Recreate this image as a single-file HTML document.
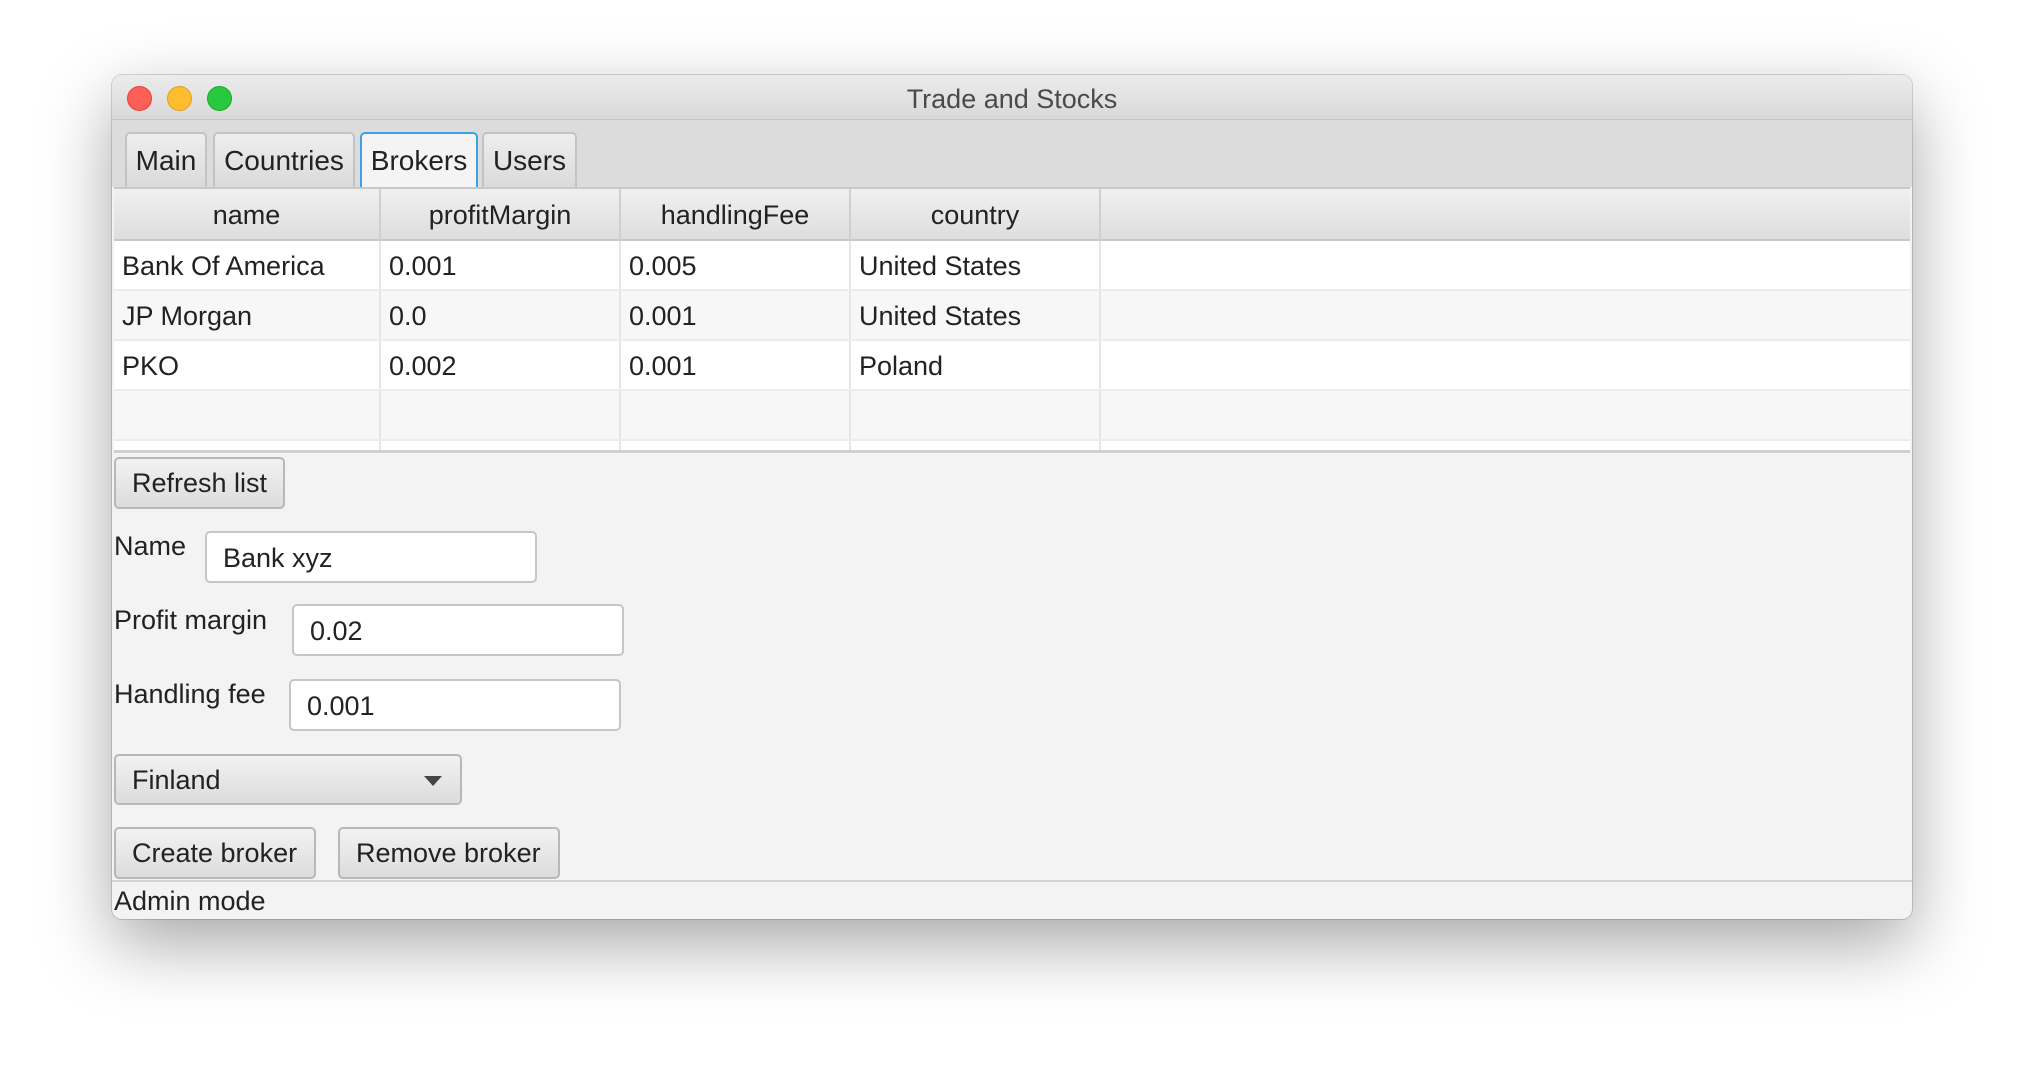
<!DOCTYPE html>
<html><head><style>
body{margin:0;width:2024px;height:1068px;background:#fff;position:relative;overflow:hidden;font-family:"Liberation Sans",sans-serif;color:#222}
.win{position:absolute;left:112px;top:75px;width:1800px;height:844px;background:#f3f3f3;border-radius:10px;box-shadow:0 25px 70px rgba(0,0,0,.35),0 0 0 1px rgba(0,0,0,.15);overflow:hidden}
.title{position:absolute;left:0;top:0;right:0;height:44px;background:linear-gradient(#ececec,#d9d9d9);border-bottom:1px solid #c4c4c4;text-align:center;line-height:48px;font-size:27px;color:#4a4a4a}
.dot{position:absolute;top:11px;width:23px;height:23px;border-radius:50%}
.tabs{position:absolute;left:0;top:45px;right:0;height:67px;background:#dcdcdc}
.tab{position:absolute;top:12px;height:55px;border:2px solid #c3c3c3;border-bottom:none;border-radius:5px 5px 0 0;background:linear-gradient(#eee,#dadada);font-size:28px;line-height:54px;text-align:center;box-sizing:border-box;white-space:nowrap}
.abs{position:absolute}
.tbl{position:absolute;left:2px;top:112px;width:1796px;height:261px;background:#fafafa;border-top:2px solid #c9c9c9;border-bottom:3px solid #cfcfcf;overflow:hidden}
.hdr{position:absolute;top:0;height:52px;background:linear-gradient(#f0f0f0,#dedede);border-right:2px solid #cfcfcf;border-bottom:2px solid #c8c8c8;font-size:27px;line-height:52px;text-align:center;box-sizing:border-box}
.row{position:absolute;left:0;width:1796px;height:50px;border-bottom:2px solid #ececec;box-sizing:border-box}
.cell{position:absolute;top:0;height:48px;line-height:50px;font-size:27px;padding-left:8px;border-right:2px solid #e6e6e6;box-sizing:border-box;white-space:nowrap}
.btn{position:absolute;height:52px;border:2px solid #b8b8b8;border-radius:5px;background:linear-gradient(#f2f2f2,#dcdcdc);font-size:27px;line-height:48px;padding-left:16px;box-sizing:border-box;white-space:nowrap}
.fld{position:absolute;width:332px;height:52px;border:2px solid #c6c6c6;border-radius:5px;background:#fff;font-size:27px;line-height:50px;padding-left:16px;box-sizing:border-box}
.lbl{position:absolute;left:2px;font-size:27px;white-space:nowrap}
</style></head><body>
<div class="win">
<div class="title">Trade and Stocks
<div class="dot" style="left:15px;background:#fd5f57;border:1px solid #e0443e"></div>
<div class="dot" style="left:55px;background:#febc2e;border:1px solid #dea123"></div>
<div class="dot" style="left:95px;background:#28c840;border:1px solid #1aab29"></div>
</div>
<div class="tabs">
<div class="tab" style="left:13px;width:82px">Main</div>
<div class="tab" style="left:101px;width:142px">Countries</div>
<div class="tab" style="left:248px;width:118px;border-color:#3aa3e3;background:#f4f4f4;height:56px">Brokers</div>
<div class="tab" style="left:370px;width:95px">Users</div>
</div>
<div class="tbl">
<div class="hdr" style="left:0;width:267px">name</div>
<div class="hdr" style="left:267px;width:240px">profitMargin</div>
<div class="hdr" style="left:507px;width:230px">handlingFee</div>
<div class="hdr" style="left:737px;width:250px">country</div>
<div class="hdr" style="left:987px;width:809px;border-right:none"></div>
<div class="row" style="top:52px;background:#fff"><div class="cell" style="left:0;width:267px">Bank Of America</div><div class="cell" style="left:267px;width:240px">0.001</div><div class="cell" style="left:507px;width:230px">0.005</div><div class="cell" style="left:737px;width:250px">United States</div></div>
<div class="row" style="top:102px;background:#f7f7f7"><div class="cell" style="left:0;width:267px">JP Morgan</div><div class="cell" style="left:267px;width:240px">0.0</div><div class="cell" style="left:507px;width:230px">0.001</div><div class="cell" style="left:737px;width:250px">United States</div></div>
<div class="row" style="top:152px;background:#fff"><div class="cell" style="left:0;width:267px">PKO</div><div class="cell" style="left:267px;width:240px">0.002</div><div class="cell" style="left:507px;width:230px">0.001</div><div class="cell" style="left:737px;width:250px">Poland</div></div>
<div class="row" style="top:202px;background:#f7f7f7"><div class="cell" style="left:0;width:267px"></div><div class="cell" style="left:267px;width:240px"></div><div class="cell" style="left:507px;width:230px"></div><div class="cell" style="left:737px;width:250px"></div></div>
<div class="row" style="top:252px;background:#fff"><div class="cell" style="left:0;width:267px"></div><div class="cell" style="left:267px;width:240px"></div><div class="cell" style="left:507px;width:230px"></div><div class="cell" style="left:737px;width:250px"></div></div>
</div>
<div class="btn" style="left:2px;top:382px;width:171px">Refresh list</div>
<div class="lbl" style="top:456px">Name</div>
<div class="fld" style="left:93px;top:456px">Bank xyz</div>
<div class="lbl" style="top:530px">Profit margin</div>
<div class="fld" style="left:180px;top:529px">0.02</div>
<div class="lbl" style="top:604px">Handling fee</div>
<div class="fld" style="left:177px;top:604px">0.001</div>
<div class="btn" style="left:2px;top:679px;width:348px;height:51px">Finland<span style="position:absolute;right:18px;top:20px;width:0;height:0;border-left:9px solid transparent;border-right:9px solid transparent;border-top:10px solid #444"></span></div>
<div class="btn" style="left:2px;top:752px;width:202px">Create broker</div>
<div class="btn" style="left:226px;top:752px;width:222px">Remove broker</div>
<div class="abs" style="left:0;top:805px;width:1800px;border-top:2px solid #d4d4d4"></div>
<div class="lbl" style="top:811px;left:2px">Admin mode</div>
</div>
</body></html>
